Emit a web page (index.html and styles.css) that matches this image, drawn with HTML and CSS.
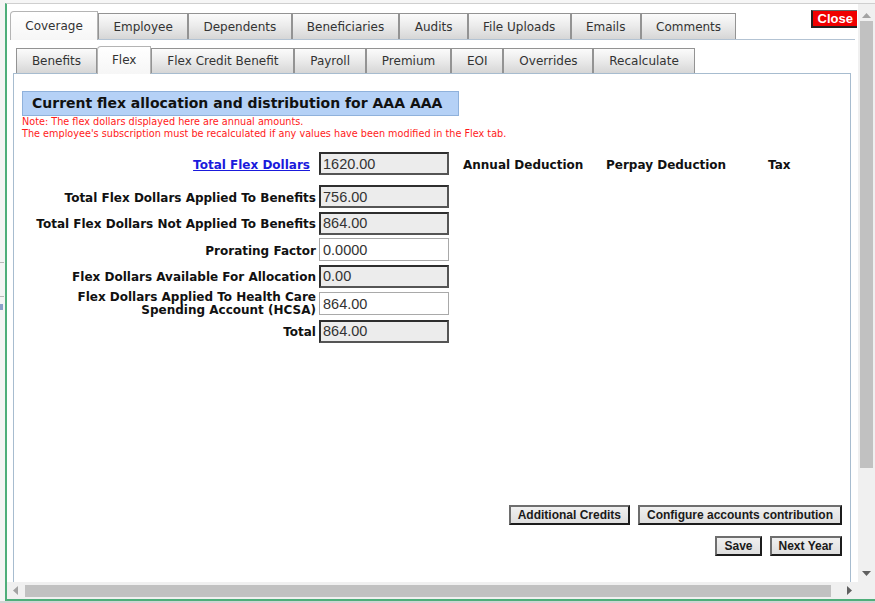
FILE: index.html
```html
<!DOCTYPE html>
<html lang="en">
<head>
<meta charset="utf-8">
<title>Flex</title>
<link rel="stylesheet" href="styles.css">
</head>
<body>
<div class="frame">
  <div class="backdrop"></div>
  <div class="dialog">
    <div class="viewport">
      <div class="content">
        <div class="tabbar">
          <div class="tab active">Coverage</div>
          <div class="tab">Employee</div>
          <div class="tab">Dependents</div>
          <div class="tab">Beneficiaries</div>
          <div class="tab">Audits</div>
          <div class="tab">File Uploads</div>
          <div class="tab">Emails</div>
          <div class="tab">Comments</div>
          <button class="close" type="button">Close</button>
        </div>
        <div class="coverage">
          <div class="subtabs">
            <div class="tab sub">Benefits</div>
            <div class="tab sub active">Flex</div>
            <div class="tab sub">Flex Credit Benefit</div>
            <div class="tab sub">Payroll</div>
            <div class="tab sub">Premium</div>
            <div class="tab sub">EOI</div>
            <div class="tab sub">Overrides</div>
            <div class="tab sub">Recalculate</div>
          </div>
          <div class="panel">
            <h2 class="title">Current flex allocation and distribution for AAA AAA</h2>
            <p class="note">Note: The flex dollars displayed here are annual amounts.<br>The employee's subscription must be recalculated if any values have been modified in the Flex tab.</p>
            <div class="flexform">
              <a class="lbl link top" href="#">Total Flex Dollars</a>
              <input class="fld ro top" type="text" value="1620.00" readonly>
              <div class="colhead top first">Annual Deduction</div>
              <div class="colhead top">Perpay Deduction</div>
              <div class="colhead top">Tax</div>

              <label class="lbl">Total Flex Dollars Applied To Benefits</label>
              <input class="fld ro" type="text" value="756.00" readonly>

              <label class="lbl">Total Flex Dollars Not Applied To Benefits</label>
              <input class="fld ro" type="text" value="864.00" readonly>

              <label class="lbl">Prorating Factor</label>
              <input class="fld" type="text" value="0.0000">

              <label class="lbl">Flex Dollars Available For Allocation</label>
              <input class="fld ro" type="text" value="0.00" readonly>

              <label class="lbl two">Flex Dollars Applied To Health Care<br>Spending Account (HCSA)</label>
              <input class="fld" type="text" value="864.00">

              <label class="lbl">Total</label>
              <input class="fld ro" type="text" value="864.00" readonly>
            </div>
            <div class="actions">
              <div class="btnrow">
                <button class="btn" type="button">Additional Credits</button>
                <button class="btn" type="button">Configure accounts contribution</button>
              </div>
              <div class="btnrow">
                <button class="btn" type="button">Save</button>
                <button class="btn" type="button">Next Year</button>
              </div>
            </div>
          </div>
        </div>
      </div>
      <div class="vscroll">
        <div class="arrow up"><svg width="9" height="5" viewBox="0 0 9 5"><polygon points="0,5 4.5,0 9,5" fill="#a3a3a3"/></svg></div>
        <div class="vthumb"></div>
        <div class="track"></div>
        <div class="arrow down"><svg width="9" height="5" viewBox="0 0 9 5"><polygon points="0,0 9,0 4.5,5" fill="#606060"/></svg></div>
      </div>
      <div class="hscroll">
        <div class="harrow"><svg width="5" height="9" viewBox="0 0 5 9"><polygon points="5,0 5,9 0,4.5" fill="#a3a3a3"/></svg></div>
        <div class="hthumb"></div>
        <div class="track"></div>
        <div class="harrow"><svg width="5" height="9" viewBox="0 0 5 9"><polygon points="0,0 5,4.5 0,9" fill="#606060"/></svg></div>
      </div>
      <div class="corner"></div>
    </div>
  </div>
</div>
</body>
</html>
```

FILE: styles.css
```css
html, body {
  margin: 0;
  padding: 0;
}

body {
  font-family: "DejaVu Sans", Verdana, sans-serif;
  background: #f6f6f6;
  color: #333;
}

.frame {
  display: flex;
  width: 875px;
  height: 603px;
  box-sizing: border-box;
  border-bottom: 2px solid #d3d3d3;
  background: #f6f6f6;
}

.backdrop {
  flex: none;
  width: 5px;
  background-color: #f4f4f4;
  background-image:
    linear-gradient(#b8b8b8, #b8b8b8),
    linear-gradient(#b8b8b8, #b8b8b8),
    linear-gradient(#8aa0c8, #8aa0c8);
  background-size: 4px 1px, 4px 1px, 3px 6px;
  background-position: 0 262px, 0 296px, 0 304px;
  background-repeat: no-repeat;
}

.dialog {
  flex: 1;
  min-width: 0;
  display: flex;
  flex-direction: column;
  margin-top: 3px;
  border-left: 2px solid #4fae7a;
  border-top: 1px solid #cfcfcf;
  border-bottom: 2px solid #4fae7a;
  background: #fff;
}

.viewport {
  flex: 1;
  min-height: 0;
  display: grid;
  grid-template-columns: 1fr 17px;
  grid-template-rows: 1fr 17px;
  overflow: hidden;
}

.content {
  grid-column: 1;
  grid-row: 1;
  overflow: hidden;
  padding: 7px 3px 0 3px;
  min-width: 0;
}

/* ---------- tabs ---------- */
.tabbar {
  display: flex;
  align-items: flex-end;
  border-bottom: 1px solid #b3c3d3;
}

.tab {
  flex: none;
  box-sizing: border-box;
  height: 26px;
  padding: 0 14.3px;
  display: flex;
  align-items: center;
  font-size: 12px;
  color: #333;
  border: 1px solid #939393;
  border-bottom: none;
  background: linear-gradient(#fbfbfb 0%, #ececec 45%, #d6d6d6 100%);
  white-space: nowrap;
}

.tab.active {
  height: 29px;
  margin-bottom: -1px;
  padding-bottom: 1px;
  border-color: #b4b4b4;
  border-top-left-radius: 4px;
  background: linear-gradient(#ffffff, #f6f6f6);
  position: relative;
  z-index: 1;
}

.close {
  align-self: flex-start;
  margin: -1px -2px 0 auto;
  height: 18px;
  padding: 0 4px 0 5px;
  border: none;
  border-left: 2px solid #222;
  border-bottom: 2px solid #222;
  border-top: 1px solid #666;
  background: #f00000;
  color: #fff;
  font-family: "Liberation Sans", Arial, sans-serif;
  font-weight: bold;
  font-size: 13px;
  line-height: 14px;
}

.coverage {
  padding: 6px 4px 0 3px;
}

.subtabs {
  display: flex;
  align-items: flex-end;
  margin-left: 3px;
}

.tab.sub {
  height: 25px;
  padding: 0 14.9px;
}

.tab.sub.active {
  height: 28px;
  padding: 0 14px 1px;
}

/* ---------- panel ---------- */
.panel {
  border: 1px solid #a7bccf;
  padding: 17px 8px 0 8px;
  height: 560px;
}

.title {
  width: fit-content;
  margin: 0;
  box-sizing: border-box;
  height: 25px;
  line-height: 23px;
  padding: 0 16px 0 9px;
  border: 1px solid #8fb1db;
  background: #b5d1f6;
  color: #111;
  font-size: 14px;
  font-weight: bold;
}

.note {
  margin: 0;
  font-size: 9.7px;
  line-height: 12px;
  color: #ff1a1a;
}

.flexform {
  margin-top: 12px;
  display: grid;
  grid-template-columns: 294px 130px 151px 159px 1fr;
  column-gap: 3px;
  row-gap: 3.5px;
  align-items: center;
}

.lbl {
  grid-column: 1;
  justify-self: end;
  text-align: right;
  padding-top: 3px;
  font-size: 12px;
  font-weight: bold;
  color: #111;
  line-height: 13px;
}

.lbl.two {
  padding-top: 0;
  line-height: 12.5px;
}

.link {
  margin-right: 6px;
  color: #1a1adc;
  text-decoration: underline;
}

.colhead {
  padding-top: 3px;
  font-size: 12px;
  font-weight: bold;
  color: #111;
  white-space: nowrap;
}

.colhead.first {
  padding-left: 11px;
}

.fld {
  grid-column: 2;
  box-sizing: border-box;
  width: 130px;
  height: 23px;
  margin: 0;
  padding: 0 3px;
  border: 1px solid #a9a9a9;
  background: #fff;
  color: #333;
  font-family: "Liberation Sans", Arial, sans-serif;
  font-size: 14.5px;
  outline: none;
}

.fld.ro {
  padding: 0 2px;
  border: 2px solid;
  border-color: #2e2e2e #555 #555 #2e2e2e;
  background: #ececec;
}

.flexform .top {
  margin-bottom: 6.5px;
}

/* ---------- buttons ---------- */
.actions {
  margin-top: 162px;
  display: flex;
  flex-direction: column;
  align-items: flex-end;
  gap: 11px;
}

.btnrow {
  display: flex;
  gap: 8px;
}

.btn {
  box-sizing: border-box;
  height: 20px;
  padding: 0 7px;
  border: 2px solid;
  border-color: #6e6e6e #1c1c1c #1c1c1c #6e6e6e;
  background: linear-gradient(#f0f0f0, #dedede);
  color: #1a1a1a;
  font-family: "Liberation Sans", Arial, sans-serif;
  font-weight: bold;
  font-size: 12px;
  line-height: 14px;
}

/* ---------- scrollbars ---------- */
.vscroll {
  grid-column: 2;
  grid-row: 1;
  display: flex;
  flex-direction: column;
  background: #f0f0f0;
}

.arrow {
  flex: none;
  height: 17px;
  display: flex;
  justify-content: center;
  align-items: center;
}

.arrow.up {
  align-items: flex-end;
  padding-bottom: 3px;
  box-sizing: border-box;
}

.vthumb {
  flex: none;
  height: 447px;
  margin: 0 2px;
  background: #c1c1c1;
}

.track {
  flex: 1;
}

.hscroll {
  grid-column: 1;
  grid-row: 2;
  display: flex;
  align-items: stretch;
  background: #f0f0f0;
}

.harrow {
  flex: none;
  width: 17px;
  display: flex;
  justify-content: center;
  align-items: center;
}

.hthumb {
  flex: none;
  width: 806px;
  margin: 3px 0 2px 1px;
  background: #c1c1c1;
}

.corner {
  grid-column: 2;
  grid-row: 2;
  background: #f0f0f0;
}
```
